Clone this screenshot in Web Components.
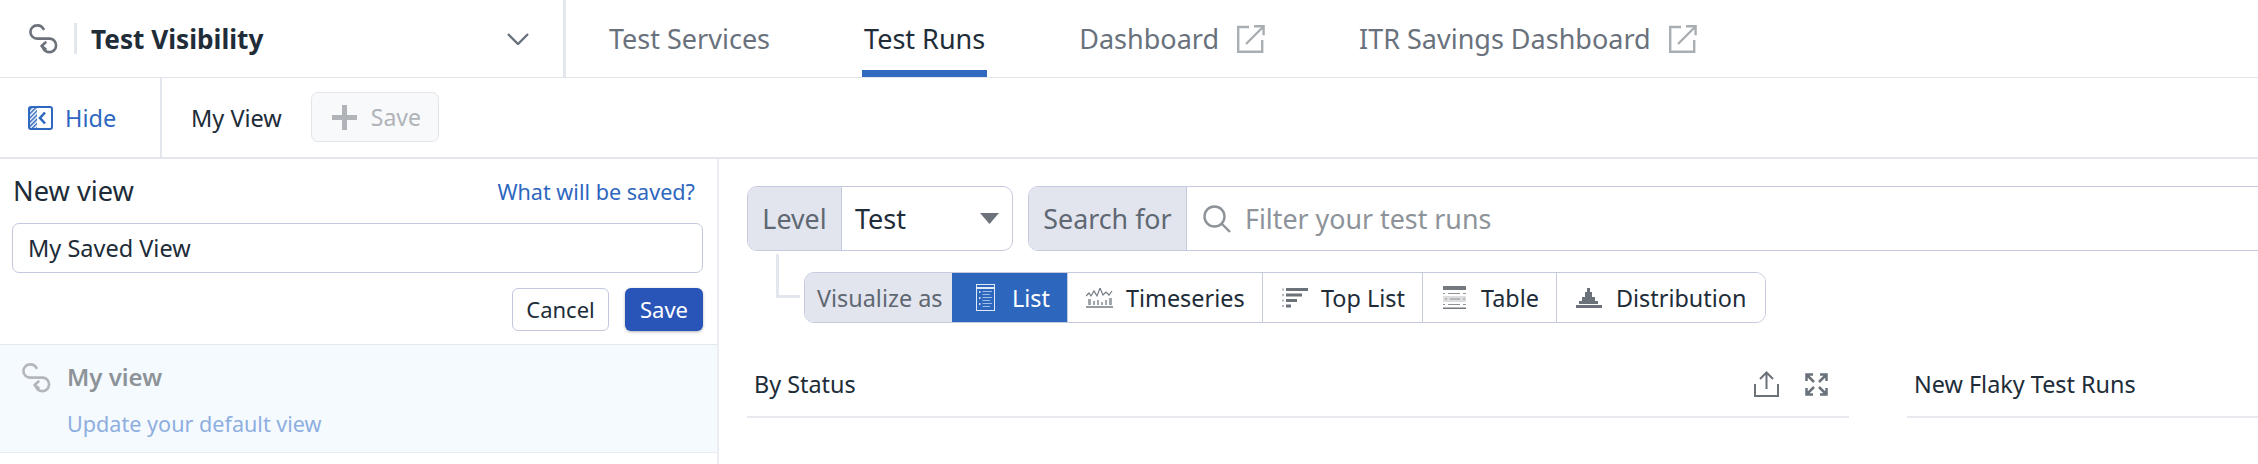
<!DOCTYPE html>
<html lang="en"><head><meta charset="utf-8"><title>Test Runs</title>
<style>
html,body{margin:0;padding:0;background:#fff;width:2258px;height:464px;overflow:hidden}
body{font-family:"Noto Sans","Open Sans",sans-serif;color:#202c38}
</style></head><body>
<dd-app>
  <dd-topbar slot="top">
    <dd-tab>Test Services</dd-tab>
    <dd-tab active>Test Runs</dd-tab>
    <dd-tab external>Dashboard</dd-tab>
    <dd-tab external>ITR Savings Dashboard</dd-tab>
  </dd-topbar>
  <dd-subbar slot="sub"></dd-subbar>
  <dd-sidebar slot="side"></dd-sidebar>
  <dd-main slot="main"></dd-main>
</dd-app>
<script>
const ICONS={
logo:(s,c)=>`<svg width="${s}" height="${s}" viewBox="0 0 30 30" fill="none" stroke="${c}" stroke-width="2.6" stroke-linecap="round" stroke-linejoin="round"><path d="M15.5 5A7 7 0 0 0 9 1.4a6.6 6.6 0 0 0 0 13.2H22a6.800 6.800 0 1 1-7.500 7.400"/><path d="M17.500 18.500 13.500 22l4 3"/></svg>`,
hide:()=>`<svg width="25" height="24" viewBox="0 0 25 24" fill="none"><defs><pattern id="h" width="3" height="3" patternUnits="userSpaceOnUse" patternTransform="rotate(45)"><rect width="1.500" height="3" fill="#2e67bf"/></pattern></defs><rect x="1" y="1" width="8" height="22" fill="url(#h)"/><rect x="1" y="1" width="23" height="22" rx="2" stroke="#2e67bf" stroke-width="2"/><path d="M17 6.500 12 12l5 5.500" stroke="#2e67bf" stroke-width="2.600"/></svg>`,
chev:()=>`<svg width="22" height="12" viewBox="0 0 22 12" fill="none"><path d="M1 1l10 10L21 1" stroke="#69727c" stroke-width="2.400"/></svg>`,
ext:()=>`<svg width="28" height="28" viewBox="0 0 28 28" fill="none" stroke="#a9aeb3" stroke-width="2.400"><path d="M12 2H1.200v24.800h24V15"/><path d="M9 19 26 2M17 1.200h9.600v9"/></svg>`,
plus:()=>`<svg width="25" height="25" viewBox="0 0 25 25"><path d="M10 0h5v10h10v5H15v10h-5V15H0v-5h10z" fill="#b0b4b8"/></svg>`,
search:()=>`<svg width="28" height="28" viewBox="0 0 28 28" fill="none" stroke="#8d9399" stroke-width="2.400"><circle cx="11.500" cy="11.500" r="10"/><path d="M18.500 18.500 27 27"/></svg>`,
caret:()=>`<svg width="19" height="11" viewBox="0 0 19 11"><path d="M0 0h19L9.500 11z" fill="#6b7279"/></svg>`,
list:()=>`<svg width="19" height="27" viewBox="0 0 19 27" fill="none" stroke="#dfe9f7"><rect x=".5" y=".5" width="18" height="26"/><path d="M0 4h19" stroke-width="2"/><path d="M3 8h1.500M3 14h1.500M3 20h1.500" stroke="#fff" stroke-width="1.500"/><path d="M6.500 7.500H16M6.500 10.500H14M6.500 13.500H16M6.500 16.500H14M6.500 19.500H16M6.500 22.500H14" stroke="#9dbce8"/></svg>`,
time:()=>`<svg width="27" height="20" viewBox="0 0 27 20" fill="none"><path d="M0 8l3-3 2 3 3-5 3 5 3-8 3 7 3-3 3 3 3-4" stroke="#737b83" stroke-width="1.200"/><path d="M2 11h3v6H2zM7 13h2v4H7zM11 12h2v5h-2zM15 14h2v3h-2zM19 12h2v5h-2zM23 10h3v7h-3z" fill="#a2a7ac"/><path d="M0 19h27" stroke="#737b83" stroke-width="1.500"/></svg>`,
top:()=>`<svg width="26" height="20" viewBox="0 0 26 20"><path d="M4 0h22v3H4zM4 5.500h16v3H4zM4 11h11v3H4zM4 16.500h5v3H4z" fill="#6b7279"/><path d="M0 .5h2v2H0zM0 6h2v2H0zM0 11.500h2v2H0zM0 17h2v2H0z" fill="#b4b8bc"/></svg>`,
table:()=>`<svg width="23" height="23" viewBox="0 0 23 23"><path d="M0 0h23v4H0z" fill="#73797f"/><path d="M0 10h23v6H0z" fill="#dcdee0"/><path d="M0 21.500h23V23H0z" fill="#73797f"/><path d="M0 7h2v1H0zM5 7h12v1H5zM20 7h3v1h-3zM2 12.500h2v1H2zM7 12.500h10v1H7zM20 12.500h2v1h-2zM0 18h2v1H0zM5 18h12v1H5zM20 18h3v1h-3z" fill="#8e9398"/></svg>`,
dist:()=>`<svg width="26" height="20" viewBox="0 0 26 20"><path d="M11 0h3v4h2v5h3v4h3v3H3v-3h3V9h3V4h2z" fill="#6b7279"/><path d="M0 17h26v3H0z" fill="#6b7279"/></svg>`,
up:()=>`<svg width="25" height="26" viewBox="0 0 25 26" fill="none" stroke="#6b7279" stroke-width="2"><path d="M12.500 18V2M6 8l6.500-6.500L19 8"/><path d="M1 13v12h23V13"/></svg>`,
expand:()=>`<svg width="23" height="23" viewBox="0 0 23 23" fill="none" stroke="#6b7279" stroke-width="2.500"><path d="M1.500 8V1.500H8M2 2l7 7M21.500 8V1.500H15M21 2l-7 7M1.500 15v6.500H8M2 21l7-7M21.500 15v6.500H15M21 21l-7-7"/></svg>`
};
function def(name,html){
  customElements.define(name,class extends HTMLElement{
    constructor(){super();this.attachShadow({mode:'open'}).innerHTML=typeof html==='function'?html(this):html;}
  });
}
def('dd-app',`<style>:host{display:flex;flex-direction:column;width:2258px;height:464px;overflow:hidden}
.body{display:grid;grid-template-columns:719px 1fr;height:305px}</style>
<slot name="top"></slot><slot name="sub"></slot><div class="body"><slot name="side"></slot><slot name="main"></slot></div>`);
def('dd-topbar',`<style>:host{display:flex;height:78px;flex:none;box-sizing:border-box;border-bottom:1px solid #e2e4ea;white-space:nowrap}
.l{width:566px;flex:none;box-sizing:border-box;border-right:3px solid #e4e6ed;display:flex;align-items:center;padding-left:28px}
.d{width:3px;height:31px;background:#e4e6ed;margin:0 0 0 16px}
.n{font-weight:700;font-size:26.200px;margin-left:14px;flex:1;color:#202c38}
.c{margin-right:34px;display:flex}
.r{display:flex;padding-left:41px;gap:90px}
</style><div class="l">${ICONS.logo(30,'#6b7279')}<div class="d"></div><div class="n">Test Visibility</div><div class="c">${ICONS.chev()}</div></div>
<div class="r"><slot></slot></div>`);
def('dd-tab',el=>`<style>:host{display:flex;align-items:center;gap:18px;height:77px;padding:0 2px;box-sizing:border-box;font-size:27px;color:${el.hasAttribute('active')?'#202c38':'#69727c'};border-top:7px solid transparent;border-bottom:7px solid ${el.hasAttribute('active')?'#2f69c0':'transparent'}}
div{display:flex}</style><span><slot></slot></span>${el.hasAttribute('external')?`<div>${ICONS.ext()}</div>`:''}`);
def('dd-subbar',`<style>:host{display:flex;height:81px;flex:none;box-sizing:border-box;border-bottom:2px solid #e4e6ed;white-space:nowrap}
.h{width:162px;box-sizing:border-box;border-right:2px solid #e4e6ed;display:flex;align-items:center;padding-left:28px;gap:12px;color:#2e67bf;font-size:23.500px}
.v{margin-left:29px;font-size:23.500px;align-self:center;color:#202c38}
.b{margin:14px 0 0 29px;width:128px;height:50px;box-sizing:border-box;border:1px solid #e3e5ea;border-radius:7px;background:#f8f9fb;display:flex;align-items:center;padding-left:20px;gap:14px;color:#b0b4b8;font-size:23px}
svg{display:block}</style><div class="h">${ICONS.hide()}<span>Hide</span></div><div class="v">My View</div><div class="b">${ICONS.plus()}<span>Save</span></div>`);
def('dd-sidebar',`<style>:host{display:flex;flex-direction:column;border-right:2px solid #ebedf2;box-sizing:border-box;height:305px;white-space:nowrap}
.form{padding:0 14px 14px 12px;height:186px;flex:none;box-sizing:border-box;border-bottom:1px solid #e4e7ec}
.head{display:flex;justify-content:space-between;align-items:center;height:64px;padding-left:1px}
.title{font-size:27.200px;color:#202c38;margin-top:-2px}
.link{font-size:21.600px;color:#2e67bf;margin-right:8px}
.input{height:50px;box-sizing:border-box;border:1px solid #c3c8de;border-radius:7px;display:flex;align-items:center;padding-left:15px;font-size:23.500px;color:#202c38}
.btns{display:flex;justify-content:flex-end;gap:16px;margin-top:15px}
.btn{height:43px;box-sizing:border-box;border-radius:6px;display:flex;align-items:center;justify-content:center;font-size:22px;padding-bottom:1px}
.cancel{width:97px;border:1px solid #c3c8de;color:#202c38}
.save{width:78px;background:#2a55b8;color:#fff;box-shadow:0 1px 3px rgba(0,0,0,.3)}
.item{height:108px;flex:none;background:#f5fafe;border-bottom:1px solid #e8ecf0;box-sizing:border-box;display:grid;grid-template-columns:46px 1fr;grid-template-rows:56px 1fr;padding-left:21px;}
.ic{padding-top:18px}.nm{font-size:24px;font-weight:600;color:#8d9399;align-self:end;padding-bottom:8px;line-height:32px}
.up{grid-column:2;font-size:21.600px;color:#8eaee0;padding-top:8px}
svg{display:block}</style>
<div class="form"><div class="head"><span class="title">New view</span><span class="link">What will be saved?</span></div>
<div class="input">My Saved View</div><div class="btns"><div class="btn cancel">Cancel</div><div class="btn save">Save</div></div></div>
<div class="item"><div class="ic">${ICONS.logo(30,'#b3b7bb')}</div><div class="nm">My view</div><div class="up">Update your default view</div></div>`);
def('dd-query',el=>`<style>:host{display:flex;height:65px;box-sizing:border-box;border:1px solid #c5cadf;border-radius:10px;overflow:hidden;background:#fff;font-size:26.800px;white-space:nowrap}
.lb{background:#e2e5ee;color:#5f6872;display:flex;align-items:center;justify-content:center;box-sizing:border-box;border-right:1px solid #c5cadf;flex:none;width:${el.getAttribute('w')}px}
.b{flex:1;display:flex;align-items:center}</style><div class="lb">${el.getAttribute('label')}</div><div class="b"><slot></slot></div>`);
def('dd-seg',el=>`<style>:host{display:flex;align-items:center;box-sizing:border-box;height:100%;flex:none;width:${el.getAttribute('w')}px;padding-left:${el.getAttribute('p')}px;gap:${el.getAttribute('g')}px;border-right:1px solid #c5cadf;font-size:23.400px;white-space:nowrap;color:${el.hasAttribute('on')?'#fff':'#202c38'};background:${el.hasAttribute('on')?'#2d66bd':'#fff'}}
:host(:last-child){border-right:0}div{display:flex}</style><div>${ICONS[el.getAttribute('i')]()}</div><slot></slot>`);
def('dd-viz',`<style>:host{display:flex;height:51px;box-sizing:border-box;border:1px solid #c5cadf;border-radius:10px;overflow:hidden;width:962px;background:#fff}
.lb{width:147px;flex:none;box-sizing:border-box;background:#e2e5ee;color:#5f6872;font-size:23.400px;white-space:nowrap;display:flex;align-items:center;padding-left:12px}</style><div class="lb">Visualize as</div><slot></slot>`);
def('dd-panel',`<style>:host{display:flex;align-items:center;justify-content:space-between;height:64px;box-sizing:border-box;border-bottom:2px solid #e8e9ef;padding:0 21px 2px 7px;font-size:23.400px;color:#202c38;white-space:nowrap}
.a{display:flex;align-items:center;gap:26px}slot[name=a]{display:flex;align-items:center;gap:26px}</style><span><slot></slot></span><div class="a"><slot name="a"></slot></div>`);
def('dd-glyph',el=>`<style>:host{display:flex}</style>${ICONS[el.getAttribute('i')]()}`);
def('dd-main',`<style>:host{display:block;padding:27px 0 0 28px;min-width:0}
.row{display:flex;gap:15px;margin-right:-40px}
.lv{width:266px;flex:none}.sr{flex:1}
.val{display:flex;align-items:center;justify-content:space-between;width:100%;padding:0 13px 0 13px;color:#202c38;font-size:27px}
.q{display:flex;align-items:center;gap:14px;padding-left:16px;color:#8d9399}
.q svg,.val svg{display:block}
.vr{display:flex;margin-top:21px}
.con{width:24px;height:44px;margin:-18px 4px 0 29px;box-sizing:border-box;border-left:3px solid #e4e6ed;border-bottom:3px solid #e4e6ed;flex:none}
.panels{display:grid;grid-template-columns:1102px 400px;gap:58px;margin-top:31px}
</style>
<div class="row"><dd-query class="lv" label="Level" w="94"><div class="val"><span>Test</span>${ICONS.caret()}</div></dd-query>
<dd-query class="sr" label="Search for" w="158"><div class="q">${ICONS.search()}<span>Filter your test runs</span></div></dd-query></div>
<div class="vr"><div class="con"></div><dd-viz>
<dd-seg on i="list" w="116" p="24" g="17">List</dd-seg>
<dd-seg i="time" w="195" p="18" g="13">Timeseries</dd-seg>
<dd-seg i="top" w="160" p="19" g="13">Top List</dd-seg>
<dd-seg i="table" w="134" p="20" g="15">Table</dd-seg>
<dd-seg i="dist" w="208" p="19" g="14">Distribution</dd-seg>
</dd-viz></div>
<div class="panels"><dd-panel>By Status<dd-glyph slot="a" i="up"></dd-glyph><dd-glyph slot="a" i="expand"></dd-glyph></dd-panel><dd-panel>New Flaky Test Runs</dd-panel></div>`);
</script>
</body></html>
